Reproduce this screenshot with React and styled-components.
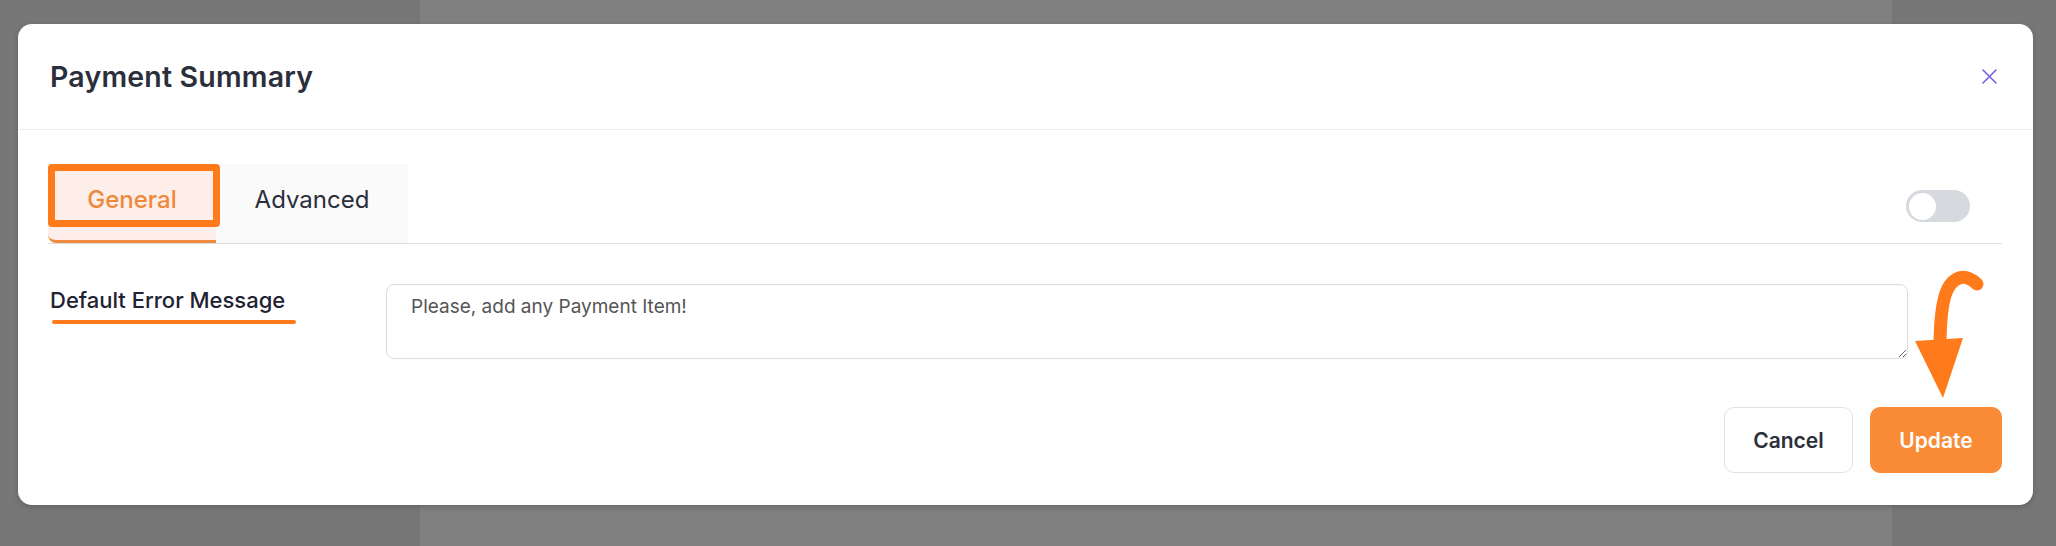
import React from 'react';
import styled, { createGlobalStyle } from 'styled-components';

const GlobalStyle = createGlobalStyle`
  html, body {
    margin: 0;
    padding: 0;
    overflow: hidden;
  }
  body {
    font-family: Inter, "Noto Sans", sans-serif;
  }
`;

const Backdrop = styled.div`
  width: 2056px;
  height: 546px;
  box-sizing: border-box;
  padding: 24px 23px 0 18px;
  background: linear-gradient(
    to right,
    #777777 0,
    #777777 420px,
    #808080 420px,
    #808080 1892px,
    #777777 1892px
  );
`;

const Modal = styled.div`
  position: relative;
  background: #fff;
  border-radius: 14px;
  box-shadow: 0 2px 6px rgba(0, 0, 0, 0.18);
  overflow: hidden;
`;

const Header = styled.div`
  height: 105px;
  display: flex;
  align-items: center;
  justify-content: space-between;
  padding: 0 36px 0 32px;
  border-bottom: 1px solid #ececec;
`;

const Title = styled.h2`
  margin: 0;
  font-size: 28.5px;
  font-weight: 600;
  color: #2b2e3b;
  letter-spacing: 0.2px;
`;

const CloseButton = styled.button`
  border: none;
  background: none;
  padding: 0;
  width: 15px;
  height: 15px;
  display: flex;
  color: #6c5ce0;
  cursor: pointer;
`;

const Body = styled.div`
  padding: 34px 31px 32px 30px;
`;

const TabBar = styled.div`
  display: flex;
  align-items: center;
  border-bottom: 1px solid #dedede;
`;

const TabList = styled.div`
  display: flex;
  flex: 1;
`;

const Tab = styled.div`
  position: relative;
  box-sizing: border-box;
  height: 79px;
  width: ${(p) => p.$width}px;
  display: flex;
  align-items: center;
  justify-content: center;
  padding-bottom: 6px;
  font-size: 24px;
  font-weight: ${(p) => (p.$active ? 500 : 400)};
  color: ${(p) => (p.$active ? '#f0883c' : '#2b2e3b')};
  background: ${(p) => (p.$active ? '#fdeee9' : '#fafafa')};
  border-bottom: 3px solid ${(p) => (p.$active ? '#f08a3e' : 'transparent')};
  border-bottom-left-radius: ${(p) => (p.$active ? '8px' : '0')};
`;

const HighlightBox = styled.span`
  position: absolute;
  z-index: 1;
  left: 0;
  top: 0;
  width: 172px;
  height: 63px;
  box-sizing: border-box;
  border: 7px solid #ff7a1a;
  border-radius: 4px;
  pointer-events: none;
`;

const Switch = styled.button`
  width: 64px;
  height: 32px;
  margin: 5px 32px 0 0;
  padding: 0 3px;
  border: none;
  border-radius: 16px;
  background: #d6d9de;
  display: flex;
  align-items: center;
`;

const Knob = styled.span`
  width: 27px;
  height: 27px;
  border-radius: 50%;
  background: #fff;
`;

const FormRow = styled.div`
  display: grid;
  grid-template-columns: 338px 1fr;
  margin-top: 40px;
  padding-right: 94px;
`;

const LabelWrap = styled.div`
  padding: 1px 0 0 2px;
`;

const Label = styled.label`
  display: block;
  font-size: 22px;
  line-height: 30px;
  font-weight: 500;
  color: #1f2231;
`;

const LabelMark = styled.span`
  display: block;
  width: 244px;
  height: 4px;
  margin: 5px 0 0 2px;
  border-radius: 2px;
  background: #ff7a1a;
`;

const TextArea = styled.textarea`
  box-sizing: border-box;
  width: 100%;
  height: 75px;
  padding: 8px 24px;
  border: 1px solid #dcdcdc;
  border-radius: 8px;
  font-family: Inter, "Noto Sans", sans-serif;
  font-size: 19px;
  line-height: 27px;
  color: #555;
  outline: none;
`;

const Footer = styled.div`
  display: flex;
  justify-content: flex-end;
  gap: 17px;
  margin-top: 48px;
`;

const Button = styled.button`
  height: 66px;
  width: ${(p) => (p.$primary ? 132 : 129)}px;
  border-radius: 10px;
  font-family: Inter, "Noto Sans", sans-serif;
  font-size: 21px;
  font-weight: 600;
  border: 1px solid ${(p) => (p.$primary ? '#f98a36' : '#e0e0e0')};
  background: ${(p) => (p.$primary ? '#f98a36' : '#fff')};
  color: ${(p) => (p.$primary ? '#fff' : '#2b2e3b')};
  cursor: pointer;
`;

const Arrow = styled.svg`
  position: absolute;
  left: 1882px;
  top: 236px;
  width: 100px;
  height: 150px;
  pointer-events: none;
`;

const tabs = [
  { label: 'General', width: 168, active: true },
  { label: 'Advanced', width: 192 },
];

export default function App() {
  return (
    <>
      <GlobalStyle />
      <Backdrop>
        <Modal>
          <Header>
            <Title>Payment Summary</Title>
            <CloseButton aria-label="Close">
              <svg width="15" height="15" viewBox="0 0 15 15" fill="none" stroke="currentColor" strokeWidth="1.5" strokeLinecap="round">
                <path d="M1 1l13 13M14 1L1 14" />
              </svg>
            </CloseButton>
          </Header>
          <Body>
            <TabBar>
              <TabList>
                {tabs.map((t) => (
                  <Tab key={t.label} $width={t.width} $active={t.active}>
                    {t.label}
                    {t.active && <HighlightBox />}
                  </Tab>
                ))}
              </TabList>
              <Switch aria-label="Toggle">
                <Knob />
              </Switch>
            </TabBar>
            <FormRow>
              <LabelWrap>
                <Label>Default Error Message</Label>
                <LabelMark />
              </LabelWrap>
              <TextArea defaultValue="Please, add any Payment Item!" />
            </FormRow>
            <Footer>
              <Button>Cancel</Button>
              <Button $primary>Update</Button>
            </Footer>
          </Body>
          <Arrow viewBox="0 0 100 150">
            <path d="M77 24 Q62 10 50 25 Q40 38 40 88" fill="none" stroke="#ff7a1a" strokeWidth="13" strokeLinecap="round" />
            <polygon points="15,81 63,78 43,138" fill="#ff7a1a" />
          </Arrow>
        </Modal>
      </Backdrop>
    </>
  );
}
